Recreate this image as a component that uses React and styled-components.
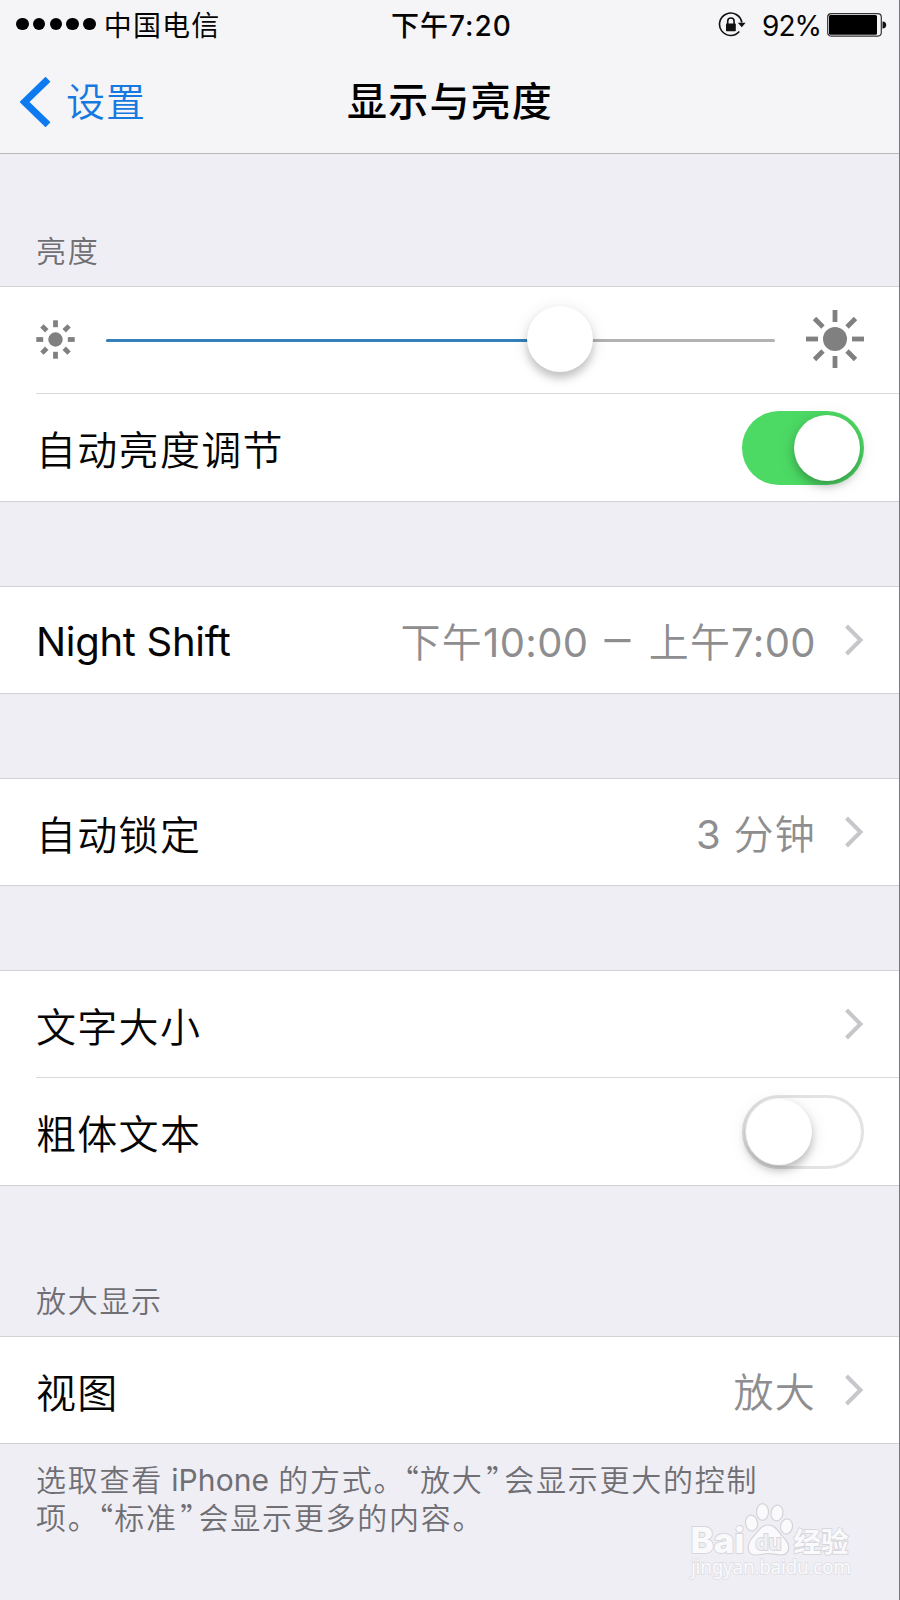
import React from "react";
import styled, { createGlobalStyle, css } from "styled-components";

const GlobalStyle = createGlobalStyle`
  body {
    margin: 0;
    background-color: #efeef4;
    font-family: Inter, "Noto Sans CJK SC", sans-serif;
    color: #050505;
  }

  * {
    box-sizing: border-box;
  }
`;

const Screen = styled.div`
  position: relative;
  width: 900px;
  height: 1600px;
  overflow: hidden;
  background-color: #efeef4;
  border-right: 1px solid #77777b;
`;

const Header = styled.header`
  height: 154px;
  background-color: #f5f5f7;
  border-bottom: 1px solid #b9b9bd;
`;

const StatusBar = styled.div`
  display: grid;
  grid-template-columns: 1fr auto 1fr;
  align-items: center;
  height: 50px;
  padding: 0 12px 0 16px;
`;

const StatusSide = styled.div`
  display: flex;
  align-items: center;
  justify-content: ${(props) => (props.end ? "flex-end" : "flex-start")};
`;

const Signal = styled.div`
  display: flex;
  gap: 4.2px;
  margin-right: 8px;
  margin-top: -2px;

  i {
    width: 12.6px;
    height: 12.6px;
    border-radius: 50%;
    background-color: #000;
  }
`;

const StatusText = styled.span`
  padding-top: 2px;
  font-size: 28px;
  line-height: 40px;
  font-weight: ${(props) => props.weight || 400};
  letter-spacing: ${(props) => props.spacing || 0}px;
  white-space: nowrap;
`;

const BatteryLevel = styled(StatusText)`
  margin: 0 6px 0 16px;
`;

const NavBar = styled.div`
  display: grid;
  grid-template-columns: 1fr auto 1fr;
  align-items: center;
  height: 103px;
  padding: 0 19px 0 20px;
`;

const BackButton = styled.a`
  display: flex;
  align-items: center;
  font-size: 39px;
  line-height: 56px;
  font-weight: 350;
  color: #1579e0;
  letter-spacing: 1px;

  svg {
    margin-right: 15px;
  }
`;

const Title = styled.h1`
  margin: 0;
  font-size: 40px;
  line-height: 56px;
  font-weight: 500;
  letter-spacing: 1.2px;
  color: #000;
`;

const SectionLabel = styled.div`
  display: flex;
  align-items: flex-end;
  height: ${(props) => props.height}px;
  padding: 0 36px 13px;
  font-size: 30px;
  line-height: 44px;
  font-weight: 350;
  letter-spacing: 1.7px;
  color: #6f6f74;
`;

const Gap = styled.div`
  height: 84px;
`;

const Group = styled.section`
  background-color: #fff;
  border-top: 1px solid #d2d2d6;
  border-bottom: 1px solid #d0d0d4;
`;

const Row = styled.div`
  display: flex;
  align-items: center;
  height: ${(props) => (props.tall ? 107 : 106)}px;
  margin-left: 36px;
  padding-right: 35px;

  ${(props) =>
    props.divided &&
    css`
      height: 107px;
      border-bottom: 1px solid #d9d9dc;
    `}
`;

const SliderRow = styled(Row)`
  padding-bottom: 2px;
`;

const Label = styled.span`
  flex: 1;
  padding-top: ${(props) => (props.latin ? 4 : 7)}px;
  font-size: 40px;
  line-height: 56px;
  font-weight: ${(props) => (props.latin ? 400 : 350)};
  letter-spacing: ${(props) => (props.latin ? -0.3 : 1.3)}px;
  font-variant-ligatures: none;
`;

const Value = styled.span`
  padding-top: 5px;
  margin-right: 29px;
  font-size: 40px;
  line-height: 56px;
  font-weight: 350;
  letter-spacing: 1.2px;
  color: #8e8e90;
  white-space: nowrap;
`;

const Digits = styled.span`
  font-weight: 400;
  letter-spacing: 0.4px;
`;

const Dash = styled.span`
  margin: 0 17px 0 16px;
  font-size: 52px;
  line-height: 1px;
  font-weight: 300;
`;

const Track = styled.div`
  position: relative;
  flex: 1;
  height: 3px;
  margin: 3px 31px 0 31px;
  border-radius: 2px;
  background-color: #b2b2b3;
`;

const TrackFill = styled.div`
  height: 3px;
  border-radius: 2px;
  background-color: #3580bb;
`;

const TrackKnob = styled.div`
  position: absolute;
  top: -33px;
  width: 66px;
  height: 66px;
  margin-left: -33px;
  border-radius: 50%;
  background-color: #fff;
  box-shadow: 0 6px 8px rgba(0, 0, 0, 0.2), 0 2px 18px rgba(0, 0, 0, 0.09);
`;

const Switch = styled.div`
  display: flex;
  justify-content: ${(props) => (props.on ? "flex-end" : "flex-start")};
  width: 122px;
  height: 74px;
  padding: ${(props) => (props.on ? 4 : 1)}px;
  border-radius: 37px;
  background-color: ${(props) => (props.on ? "#4cd964" : "#fff")};
  border: ${(props) => (props.on ? "none" : "3px solid #e3e3e4")};

  &::after {
    content: "";
    width: 66px;
    height: 66px;
    border-radius: 50%;
    background-color: #fff;
    box-shadow: 0 5px 8px rgba(0, 0, 0, 0.23), 0 3px 20px rgba(0, 0, 0, 0.09);
  }
`;

const Footnote = styled.p`
  margin: 0;
  padding: 17px 36px 0;
  font-size: 30px;
  line-height: 38.4px;
  font-weight: 350;
  letter-spacing: 1.75px;
  color: #6f6f74;
  white-space: nowrap;
`;

const Latin = styled.span`
  margin: 0 -1px 0 -2px;
  font-weight: 400;
  letter-spacing: 0.1px;
`;

const Quote = styled.span`
  margin: ${(props) => (props.closing ? "0 1px 0 3px" : "0 0 0 -2px")};
  font-family: "Noto Sans CJK SC", sans-serif;
  font-feature-settings: "palt";
  line-height: 1px;
`;

const Watermark = styled.svg`
  position: absolute;
  left: 680px;
  top: 1495px;
`;

const SUN_ANGLES = [0, 45, 90, 135, 180, 225, 270, 315];

function Sun({ size, core, inner, outer, stroke }) {
  return (
    <svg width={size} height={size} viewBox={`${-size / 2} ${-size / 2} ${size} ${size}`}>
      <circle r={core} fill="#808080" />
      {SUN_ANGLES.map((angle) => (
        <path
          key={angle}
          d={`M0 ${-inner}V${-outer}`}
          stroke="#808080"
          strokeWidth={stroke}
          transform={`rotate(${angle})`}
        />
      ))}
    </svg>
  );
}

function Chevron() {
  return (
    <svg width="19" height="32" viewBox="0 0 19 32" fill="none">
      <path d="M1.500 2L15.500 16L1.500 30" stroke="#c7c7cb" strokeWidth="4" />
    </svg>
  );
}

function RotationLock() {
  return (
    <svg width="28" height="26" viewBox="0 0 28 26" fill="none">
      <path d="M21.3 19.5A11.2 11.2 0 1 1 23.8 10.5" stroke="#111" strokeWidth="1.6" />
      <path d="M19.8 10.8H27.6L23.8 15.2Z" fill="#111" />
      <rect x="8" y="11.5" width="9.8" height="7.8" rx="0.8" fill="#111" />
      <path d="M9.7 12V9.2a3.2 3.2 0 0 1 6.4 0V12" stroke="#111" strokeWidth="1.6" />
    </svg>
  );
}

function Battery() {
  return (
    <svg width="60" height="24" viewBox="0 0 60 24">
      <rect x="0.7" y="0.7" width="53.6" height="22.4" rx="3.5" fill="none" stroke="#333" strokeWidth="1.2" />
      <rect x="2" y="2" width="48" height="19.8" rx="1.5" fill="#000" />
      <path d="M55.5 8.5c5 0 5 7 0 7z" fill="#111" />
    </svg>
  );
}

function Slider({ value }) {
  return (
    <Track>
      <TrackFill style={{ width: `${value}%` }} />
      <TrackKnob style={{ left: `${value}%` }} />
    </Track>
  );
}

function BaiduWatermark() {
  return (
    <Watermark width="180" height="90" viewBox="0 0 180 90">
      <g fill="#fafafc" stroke="#d3d3d8" strokeWidth="1.2">
        <path d="M88 30C96 30 98 37 104 43C112 51 109 60 101 60C96 60 92 58.500 88 58.500C84 58.500 80 60 76 60C67 60 66 51 72 43C78 37 81 30 88 30Z" />
        <ellipse cx="71.5" cy="28" rx="6" ry="8" transform="rotate(-8 71.5 28)" />
        <ellipse cx="82.5" cy="17" rx="6" ry="8.3" />
        <ellipse cx="97" cy="18" rx="6" ry="8" transform="rotate(8 97 18)" />
        <ellipse cx="106.5" cy="31.5" rx="6" ry="7.6" transform="rotate(10 106.5 31.5)" />
      </g>
      <g
        fill="#fafafc"
        stroke="#d6d6db"
        strokeWidth="1.8"
        paintOrder="stroke"
        fontFamily='Inter, "Noto Sans CJK SC", sans-serif'
        fontWeight="700"
      >
        <text x="10.5" y="57.500" fontSize="35" fontWeight="800" textLength="54" lengthAdjust="spacingAndGlyphs">
          Bai
        </text>
        <text x="75.500" y="54.500" fontSize="21" textLength="26" fill="#f0f0f3" strokeWidth="1.8">
          du
        </text>
        <text x="113.5" y="57" fontSize="27.5" textLength="55">
          经验
        </text>
        <text
          x="11"
          y="78.500"
          fontSize="19"
          fontFamily='"Noto Sans", sans-serif'
          fontWeight="400"
          stroke="#dcdce1"
          strokeWidth="1.4"
          textLength="160"
        >
          jingyan.baidu.com
        </text>
      </g>
    </Watermark>
  );
}

const App = () => {
  return (
    <Screen>
      <GlobalStyle />
      <Header>
        <StatusBar>
          <StatusSide>
            <Signal>
              <i />
              <i />
              <i />
              <i />
              <i />
            </Signal>
            <StatusText spacing={1.2}>中国电信</StatusText>
          </StatusSide>
          <StatusText weight={500} spacing={1}>
            下午7:20
          </StatusText>
          <StatusSide end>
            <RotationLock />
            <BatteryLevel spacing={-1}>92%</BatteryLevel>
            <Battery />
          </StatusSide>
        </StatusBar>
        <NavBar>
          <BackButton>
            <svg width="31" height="50" viewBox="0 0 31 50" fill="none">
              <path d="M28 2.200L4.500 25L28 47.800" stroke="#0d7af0" strokeWidth="7" />
            </svg>
            设置
          </BackButton>
          <Title>显示与亮度</Title>
        </NavBar>
      </Header>

      <SectionLabel height={132}>亮度</SectionLabel>
      <Group>
        <SliderRow divided>
          <Sun size={39} core={7.2} inner={12.3} outer={19.2} stroke={4.8} />
          <Slider value={67.9} />
          <Sun size={58} core={12} inner={17} outer={29} stroke={4.8} />
        </SliderRow>
        <Row tall>
          <Label>自动亮度调节</Label>
          <Switch on />
        </Row>
      </Group>

      <Gap />
      <Group>
        <Row>
          <Label latin>Night Shift</Label>
          <Value>
            下午<Digits>10:00</Digits>
            <Dash>–</Dash>
            上午<Digits>7:00</Digits>
          </Value>
          <Chevron />
        </Row>
      </Group>

      <Gap />
      <Group>
        <Row>
          <Label>自动锁定</Label>
          <Value>
            <Digits>3</Digits> 分钟
          </Value>
          <Chevron />
        </Row>
      </Group>

      <Gap />
      <Group>
        <Row divided>
          <Label>文字大小</Label>
          <Chevron />
        </Row>
        <Row tall>
          <Label>粗体文本</Label>
          <Switch />
        </Row>
      </Group>

      <SectionLabel height={150}>放大显示</SectionLabel>
      <Group>
        <Row>
          <Label>视图</Label>
          <Value>放大</Value>
          <Chevron />
        </Row>
      </Group>
      <Footnote>
        选取查看 <Latin>iPhone</Latin> 的方式。<Quote>“</Quote>放大<Quote closing>”</Quote>会显示更大的控制
        <br />
        项。<Quote>“</Quote>标准<Quote closing>”</Quote>会显示更多的内容。
      </Footnote>
      <BaiduWatermark />
    </Screen>
  );
};

export default App;
